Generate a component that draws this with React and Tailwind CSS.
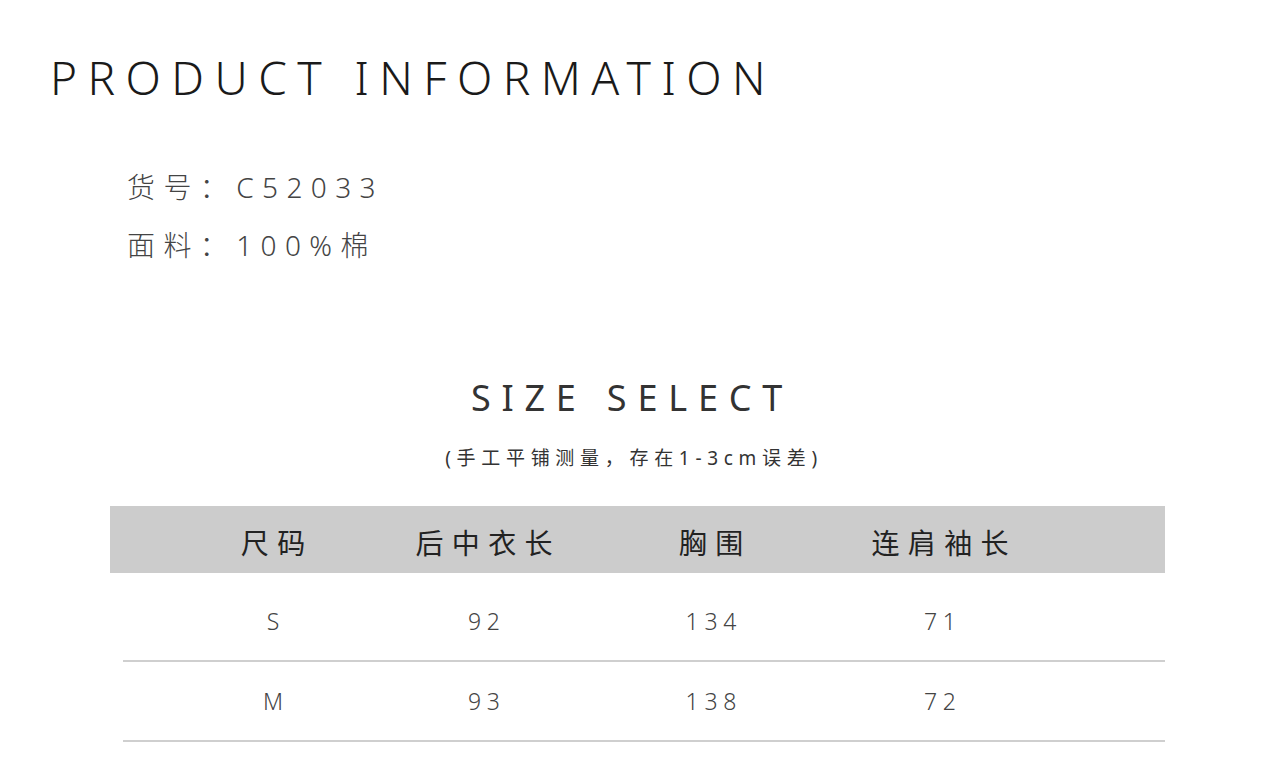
import React from "react";

const F = { fontFamily: '"Noto Sans", "Noto Sans CJK SC", sans-serif' };

function Row({ cells, className }) {
  const offs = ["ml-[50px]", "ml-[11px]", "ml-[27px]", "ml-[29px]"];
  return (
    <div className={"flex items-center " + className}>
      {cells.map((c, i) => (
        <div key={i} className={"w-[200px] text-center pl-[0.25em] " + offs[i]}>{c}</div>
      ))}
    </div>
  );
}

export default function App() {
  return (
    <div className="w-[1280px] h-[772px] bg-white overflow-hidden text-[#333]" style={F}>
      <div className="pt-[54px] pl-[50px] text-[46px] leading-[46px] font-light tracking-[0.227em] text-[#1a1a1a]">
        PRODUCT INFORMATION
      </div>
      <div className="pl-[127px] mt-[67px] flex flex-col gap-[18px] text-[28px] leading-[40px] tracking-[0.3em] font-light text-[#444]">
        <div>货号：C52033</div>
        <div>面料：100%棉</div>
      </div>
      <div className="mt-[113px] text-center pr-[16px] text-[36px] leading-[40px] tracking-[0.3em] text-[#333]">
        SIZE SELECT
      </div>
      <div className="mt-[28px] text-center pr-[12px] text-[19px] leading-[24px] tracking-[0.3em] text-[#333]">
        (手工平铺测量，存在1-3cm误差)
      </div>
      <div className="mt-[36px] ml-[110px] w-[1055px]">
        <div className="h-[67px] pt-[7px] bg-[#cccccc] flex items-center text-[28px] tracking-[0.3em] text-[#222]">
          {["尺码", "后中衣长", "胸围", "连肩袖长"].map((c, i) => (
            <div key={i} className={"w-[200px] text-center pl-[0.3em] " + ["ml-[63px]", "ml-[11px]", "ml-[27px]", "ml-[29px]"][i]}>{c}</div>
          ))}
        </div>
        <div className="ml-[13px] w-[1042px] text-[23px] font-light tracking-[0.25em] text-[#444]">
          <Row cells={["S", "92", "134", "71"]} className="h-[89px] pt-[10px] border-b-2 border-[#cfcfcf]" />
          <Row cells={["M", "93", "138", "72"]} className="h-[80px] border-b-2 border-[#cfcfcf]" />
        </div>
      </div>
    </div>
  );
}
